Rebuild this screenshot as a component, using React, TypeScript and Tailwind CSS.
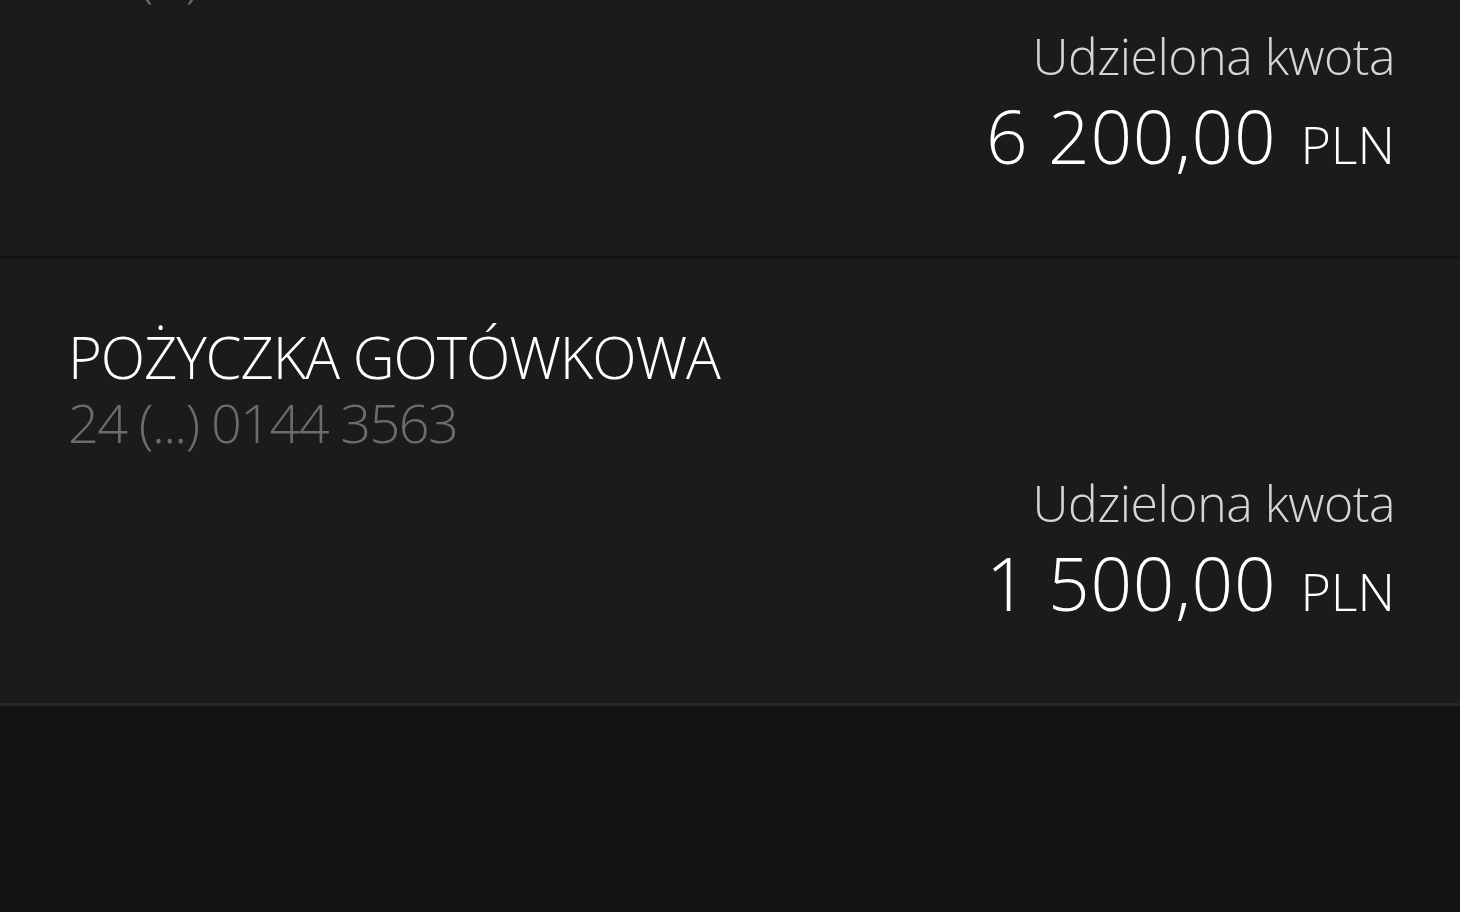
import React from 'react';

type Loan = {
  name: string;
  number: string;
  amount: string;
};

const loans: Loan[] = [
  { name: 'POŻYCZKA GOTÓWKOWA', number: '24 (...) 0144 1208', amount: '6 200,00' },
  { name: 'POŻYCZKA GOTÓWKOWA', number: '24 (...) 0144 3563', amount: '1 500,00' },
];

function LoanRow({ loan, last }: { loan: Loan; last: boolean }) {
  return (
    <div
      className={`bg-[#1b1b1b] pl-[68px] pr-[65px] pt-[68px] pb-[80px] border-b-[3px] ${
        last ? 'border-[#262626]' : 'border-[#131313]'
      }`}
    >
      <div className="text-[58px] leading-[60px] font-light text-white tracking-[-0.02em]">{loan.name}</div>
      <div className="text-[54px] leading-[60px] font-light text-[#6c6c6c] tracking-[-0.03em] mt-[5px]">{loan.number}</div>
      <div className="flex flex-col items-end mt-[23px]">
        <div className="text-[50px] leading-[56px] font-light text-[#d6d6d6] tracking-[-0.01em]">Udzielona kwota</div>
        <div className="flex items-baseline gap-[24px] text-white mt-[12px]">
          <span className="text-[73px] leading-[80px] font-light tracking-[0.01em]">{loan.amount}</span>
          <span className="text-[52px] leading-[56px] font-light">PLN</span>
        </div>
      </div>
    </div>
  );
}

export default function App() {
  return (
    <div
      className="h-screen overflow-hidden bg-[#121212]"
      style={{ fontFamily: '"Open Sans", "Noto Sans", sans-serif' }}
    >
      <div className="-mt-[188px]">
        {loans.map((loan, i) => (
          <LoanRow key={i} loan={loan} last={i === loans.length - 1} />
        ))}
      </div>
    </div>
  );
}
